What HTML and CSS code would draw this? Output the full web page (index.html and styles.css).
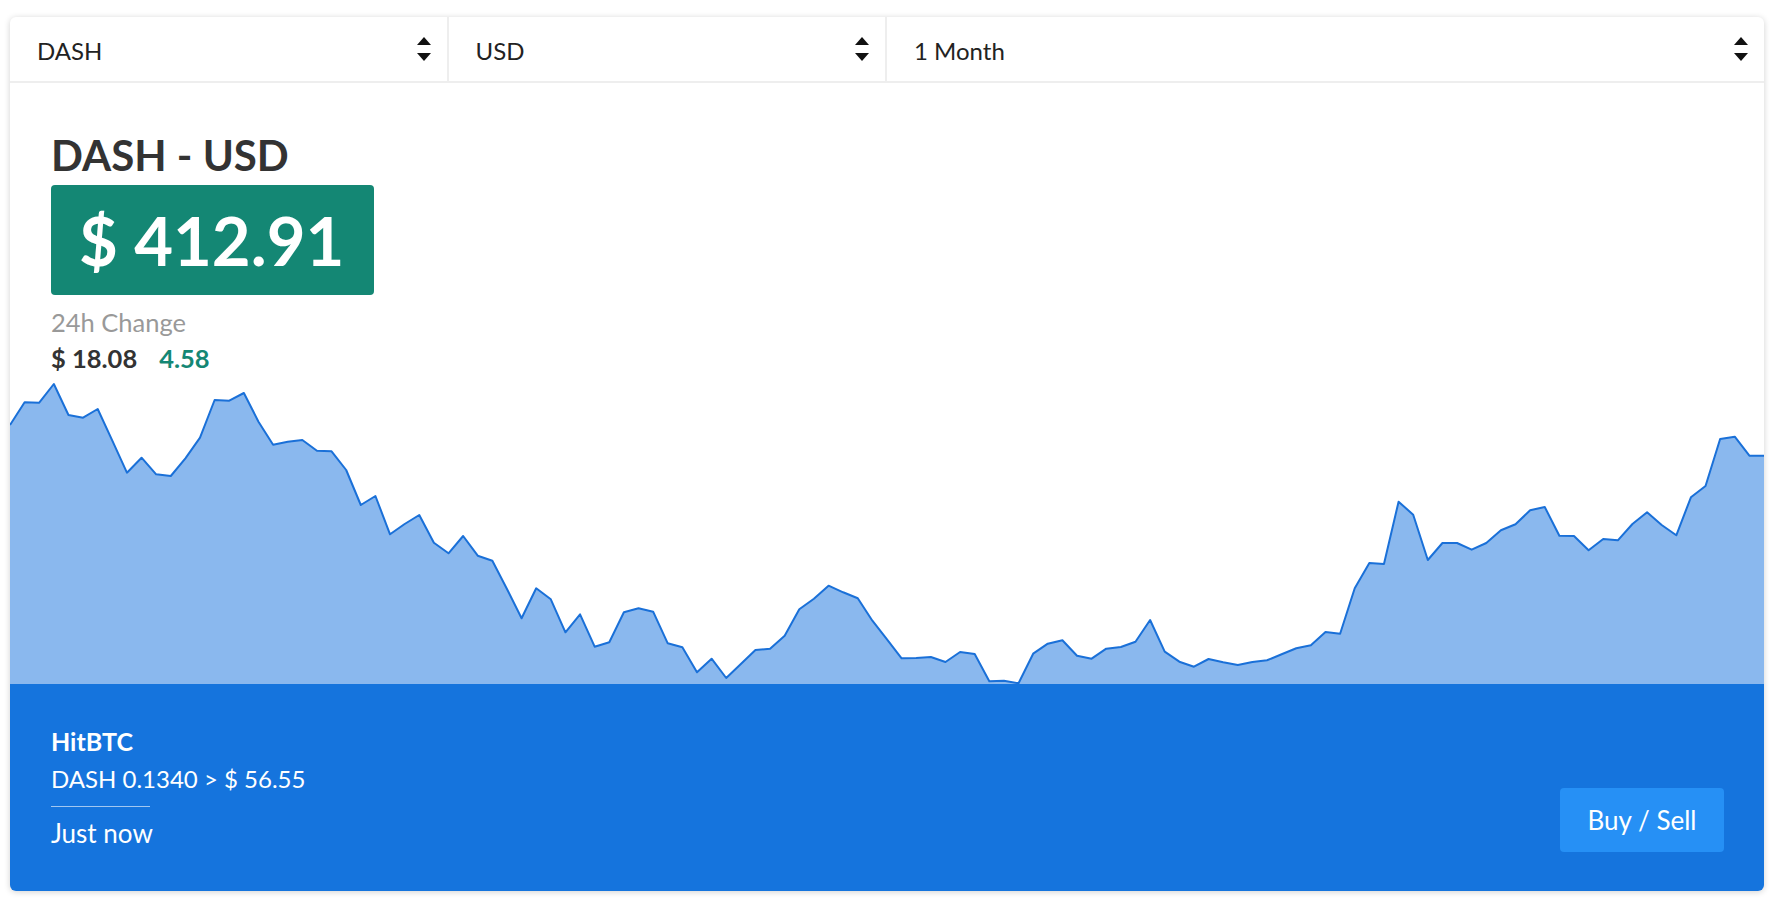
FILE: index.html
```html
<!DOCTYPE html>
<html lang="en">
<head>
  <meta charset="UTF-8" />
  <meta name="viewport" content="width=device-width, initial-scale=1" />
  <title>DASH - USD</title>
  <link rel="stylesheet" href="styles.css">
</head>
<body>

  <div class="card">
    <div class="pickers">
      <div class="picker picker-sm">
        <span>DASH</span>
        <svg class="updown" viewBox="0 0 14 26"><polygon points="0,9 7,1 14,9" /><polygon points="0,17 14,17 7,25" /></svg>
      </div>
      <div class="picker picker-sm">
        <span>USD</span>
        <svg class="updown" viewBox="0 0 14 26"><polygon points="0,9 7,1 14,9" /><polygon points="0,17 14,17 7,25" /></svg>
      </div>
      <div class="picker picker-lg">
        <span>1 Month</span>
        <svg class="updown" viewBox="0 0 14 26"><polygon points="0,9 7,1 14,9" /><polygon points="0,17 14,17 7,25" /></svg>
      </div>
    </div>

    <div class="info">
      <h1 class="pair">DASH - USD</h1>
      <div class="price">$ 412.91</div>
      <p class="change-label">24h Change</p>
      <p class="change"><span class="abs">$ 18.08</span><span class="pct">4.58</span></p>
    </div>

    <svg class="chart" viewBox="0 0 120 304" preserveAspectRatio="none">
      <polygon class="area" points="0,45 1,22.3 2,22.7 3,4 4,35 5,37.7 6,29 7,60.7 8,92.7 9,77.7 10,94.3 11,96 12,78.3 13,57.7 14,20 15,20.7 16,13 17,41.7 18,64.7 19,61.7 20,60 21,70.7 22,71.3 23,90 24,125 25,116 26,154.3 27,144 28,135 29,162.7 30,173.3 31,156 32,175.7 33,180.7 34,209 35,238.3 36,208.3 37,219.3 38,252.3 39,234.3 40,266.7 41,262.3 42,232.3 43,228.3 44,231.7 45,263.3 46,267.3 47,292.3 48,278.7 49,298 50,284 51,270 52,268.7 53,255.7 54,229.3 55,218.7 56,205.7 57,212.3 58,218.3 59,240.7 60,259.3 61,278.3 62,278 63,277 64,282 65,272 66,274 67,301.3 68,300.7 69,303.3 70,273.7 71,263.7 72,260.3 73,275.7 74,278.7 75,268.7 76,267 77,261.7 78,240 79,271.7 80,281.7 81,286.7 82,279 83,282.3 84,285 85,282 86,280.3 87,274.3 88,268.3 89,265.3 90,252 91,253.7 92,208.3 93,183 94,184 95,121.7 96,134.7 97,180 98,163 99,163 100,169.7 101,163 102,150.3 103,144.3 104,130.3 105,127 106,155.7 107,156 108,170.3 109,159 110,160.3 111,144 112,132.3 113,145 114,155.3 115,117.3 116,106 117,59 118,56.7 119,75.7 120,75.7 120,304 0,304" />
      <polyline class="line" points="0,45 1,22.3 2,22.7 3,4 4,35 5,37.7 6,29 7,60.7 8,92.7 9,77.7 10,94.3 11,96 12,78.3 13,57.7 14,20 15,20.7 16,13 17,41.7 18,64.7 19,61.7 20,60 21,70.7 22,71.3 23,90 24,125 25,116 26,154.3 27,144 28,135 29,162.7 30,173.3 31,156 32,175.7 33,180.7 34,209 35,238.3 36,208.3 37,219.3 38,252.3 39,234.3 40,266.7 41,262.3 42,232.3 43,228.3 44,231.7 45,263.3 46,267.3 47,292.3 48,278.7 49,298 50,284 51,270 52,268.7 53,255.7 54,229.3 55,218.7 56,205.7 57,212.3 58,218.3 59,240.7 60,259.3 61,278.3 62,278 63,277 64,282 65,272 66,274 67,301.3 68,300.7 69,303.3 70,273.7 71,263.7 72,260.3 73,275.7 74,278.7 75,268.7 76,267 77,261.7 78,240 79,271.7 80,281.7 81,286.7 82,279 83,282.3 84,285 85,282 86,280.3 87,274.3 88,268.3 89,265.3 90,252 91,253.7 92,208.3 93,183 94,184 95,121.7 96,134.7 97,180 98,163 99,163 100,169.7 101,163 102,150.3 103,144.3 104,130.3 105,127 106,155.7 107,156 108,170.3 109,159 110,160.3 111,144 112,132.3 113,145 114,155.3 115,117.3 116,106 117,59 118,56.7 119,75.7 120,75.7" />
    </svg>

    <div class="footer">
      <div class="trade">
        <p class="exchange">HitBTC</p>
        <p class="last">DASH 0.1340 &gt; $ 56.55</p>
        <hr class="rule">
        <p class="when">Just now</p>
      </div>
      <button class="buy-btn">Buy / Sell</button>
    </div>
  </div>

</body>
</html>
```

FILE: styles.css
```css
body {
  margin: 0;
  padding: 17px 10px 11px;
  background: #fff;
  color: #333;
  font-family: Lato, "Noto Sans", sans-serif;
}
p {
  margin: 0;
}
.card {
  background: #fff;
  border-radius: 6px;
  overflow: hidden;
  box-shadow: 0 1px 6px rgba(0,0,0,0.18);
}

/* select row */
.pickers {
  display: flex;
  height: 64px;
  border-bottom: 2px solid #eee;
}
.picker {
  display: flex;
  flex: none;
  box-sizing: border-box;
  align-items: center;
  justify-content: space-between;
  padding: 3px 16px 0 27px;
  font-size: 24px;
  color: #222;
  border-right: 2px solid #eee;
}
.picker:last-child {
  border-right: none;
}
.picker-sm {
  width: 25%;
}
.picker-lg {
  width: 50%;
}
.updown {
  width: 14px;
  height: 26px;
  margin-top: -3px;
  fill: #111;
}

/* heading + price */
.info {
  padding: 47px 41px 0;
}
.pair {
  margin: 0;
  font-size: 42px;
  line-height: 50px;
  font-weight: 700;
  color: #333;
}
.price {
  display: inline-block;
  margin-top: 5px;
  height: 110px;
  padding: 0 30px 0 28px;
  background: #148774;
  border-radius: 4px;
  color: #fff;
  font-size: 67px;
  line-height: 110px;
  font-weight: 700;
}
.change-label {
  margin-top: 12px;
  font-size: 25.5px;
  line-height: 30px;
  color: #999;
}
.change {
  margin-top: 7px;
  font-size: 25.5px;
  line-height: 29px;
  font-weight: 700;
}
.change .pct {
  margin-left: 22px;
  color: #148774;
}

/* chart */
.chart {
  display: block;
  width: 100%;
  height: 304px;
  margin-top: 7px;
}
.area {
  fill: #8ab8ee;
}
.line {
  fill: none;
  stroke: #1a70d8;
  stroke-width: 2;
  stroke-linejoin: round;
  vector-effect: non-scaling-stroke;
}

/* footer */
.footer {
  display: flex;
  justify-content: space-between;
  align-items: flex-end;
  height: 207px;
  box-sizing: border-box;
  padding: 39px 40px 39px 41px;
  background: #1574dd;
  color: #fff;
  font-size: 25px;
  line-height: 37px;
}
.exchange {
  font-weight: 700;
}
.last {
  font-size: 24px;
}
.when {
  font-size: 26px;
}
.rule {
  width: 99px;
  margin: 9px 0 8px;
  border: none;
  border-top: 1px solid rgba(255,255,255,0.6);
}
.buy-btn {
  width: 164px;
  height: 64px;
  background: #2690f5;
  color: #fff;
  border: none;
  border-radius: 4px;
  font-family: inherit;
  font-size: 26px;
  cursor: pointer;
}
```
